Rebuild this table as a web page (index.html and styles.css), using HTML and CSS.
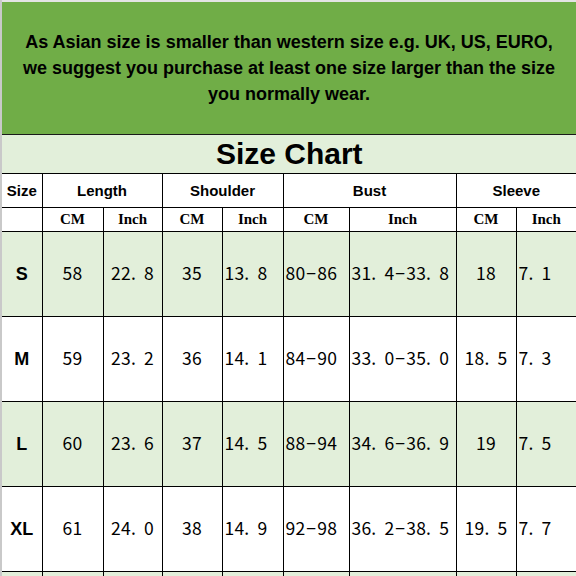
FILE: index.html
```html
<!DOCTYPE html>
<html lang="en">
<head>
<meta charset="utf-8">
<title>Size Chart</title>
<link rel="stylesheet" href="styles.css">
</head>
<body>
<div class="sheet">
  <div class="strip"></div>
  <div class="banner">
    <p>As Asian size is smaller than western size e.g. UK, US, EURO,<br>we suggest you purchase at least one size larger than the size<br>you normally wear.</p>
  </div>
  <table class="chart">
    <colgroup>
      <col class="c-size"><col class="c-61"><col class="c-59"><col class="c-60"><col class="c-61"><col class="c-66"><col class="c-107"><col class="c-60"><col class="c-last">
    </colgroup>
    <tr class="title-row"><td colspan="9">Size Chart</td></tr>
    <tr class="head1">
      <th>Size</th><th colspan="2">Length</th><th colspan="2">Shoulder</th><th colspan="2">Bust</th><th colspan="2">Sleeve</th>
    </tr>
    <tr class="head2">
      <th></th><th>CM</th><th>Inch</th><th>CM</th><th>Inch</th><th>CM</th><th>Inch</th><th>CM</th><th>Inch</th>
    </tr>
    <tr class="row alt">
      <th class="sz">S</th><td>58</td><td>22<span class="dp">.</span>8</td><td>35</td><td class="l">13<span class="dp">.</span>8</td><td class="l">80<span class="ds">−</span>86</td><td class="l">31<span class="dp">.</span>4<span class="ds">−</span>33<span class="dp">.</span>8</td><td>18</td><td class="l">7<span class="dp">.</span>1</td>
    </tr>
    <tr class="row">
      <th class="sz">M</th><td>59</td><td>23<span class="dp">.</span>2</td><td>36</td><td class="l">14<span class="dp">.</span>1</td><td class="l">84<span class="ds">−</span>90</td><td class="l">33<span class="dp">.</span>0<span class="ds">−</span>35<span class="dp">.</span>0</td><td>18<span class="dp">.</span>5</td><td class="l">7<span class="dp">.</span>3</td>
    </tr>
    <tr class="row alt">
      <th class="sz">L</th><td>60</td><td>23<span class="dp">.</span>6</td><td>37</td><td class="l">14<span class="dp">.</span>5</td><td class="l">88<span class="ds">−</span>94</td><td class="l">34<span class="dp">.</span>6<span class="ds">−</span>36<span class="dp">.</span>9</td><td>19</td><td class="l">7<span class="dp">.</span>5</td>
    </tr>
    <tr class="row">
      <th class="sz">XL</th><td>61</td><td>24<span class="dp">.</span>0</td><td>38</td><td class="l">14<span class="dp">.</span>9</td><td class="l">92<span class="ds">−</span>98</td><td class="l">36<span class="dp">.</span>2<span class="ds">−</span>38<span class="dp">.</span>5</td><td>19<span class="dp">.</span>5</td><td class="l">7<span class="dp">.</span>7</td>
    </tr>
    <tr class="row alt">
      <th class="sz"></th><td></td><td></td><td></td><td></td><td></td><td></td><td></td><td></td>
    </tr>
  </table>
</div>
</body>
</html>
```

FILE: styles.css
```css
html, body {
  margin: 0;
  padding: 0;
  width: 576px;
  height: 576px;
  overflow: hidden;
  background: #ffffff;
}

.sheet {
  width: 576px;
  border-left: 2px solid #c9c9c9;
  box-sizing: border-box;
  font-family: "Liberation Sans", Arial, sans-serif;
  color: #000;
}

.strip {
  height: 2px;
  background: #e4e4e4;
}

.banner {
  height: 133px;
  background: #70ad47;
  display: flex;
  align-items: center;
  justify-content: center;
  border-bottom: 1px solid #1a1a1a;
  box-sizing: border-box;
}

.banner p {
  margin: 0;
  text-align: center;
  font-weight: bold;
  font-size: 18px;
  line-height: 26px;
  white-space: nowrap;
}

.chart {
  border-collapse: collapse;
  table-layout: fixed;
  width: 575px;
}

.c-size { width: 40px; }
.c-61 { width: 61px; }
.c-59 { width: 59px; }
.c-60 { width: 60px; }
.c-66 { width: 66px; }
.c-107 { width: 107px; }

.chart td, .chart th {
  border: 1px solid #000;
  padding: 0;
  text-align: center;
  vertical-align: middle;
  overflow: hidden;
  white-space: nowrap;
}

.title-row td {
  height: 38px;
  background: #e2efda;
  font-weight: bold;
  font-size: 30px;
  border-top: none;
  border-left: none;
  border-right: none;
}

.head1 th {
  height: 33px;
  font-size: 15px;
  font-weight: bold;
  background: #fff;
}

.head1 th:first-child,
.head2 th:first-child,
.row th:first-child {
  border-left: none;
}

.head2 th {
  height: 23px;
  font-family: "Liberation Serif", "Times New Roman", serif;
  font-size: 15px;
  font-weight: bold;
  background: #fff;
}

.row td, .row th {
  height: 84px;
  background: #fff;
}

.row.alt td, .row.alt th {
  background: #e2efda;
}

.row td {
  font-family: "Noto Sans CJK SC", "DejaVu Sans", sans-serif;
  font-size: 17.5px;
  font-weight: normal;
  color: #000;
  letter-spacing: 0.2px;
  padding-bottom: 3px;
  box-sizing: border-box;
}

.row td .dp {
  margin-right: 8px;
}

.row td .ds {
  margin: 0 1px;
}

.row td.l {
  text-align: left;
  padding-left: 2px;
}

.row th.sz {
  font-size: 18px;
  font-weight: bold;
}
```
